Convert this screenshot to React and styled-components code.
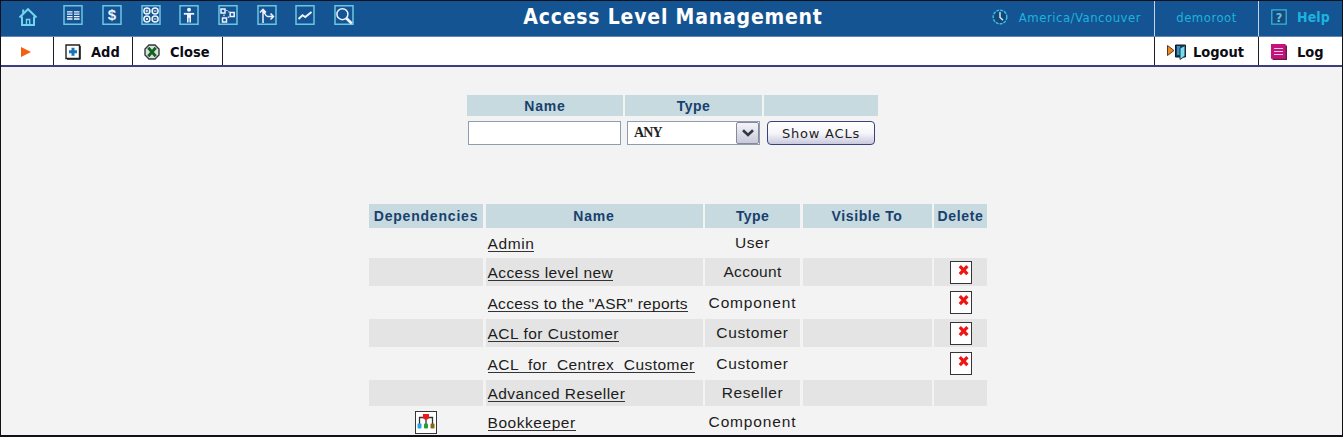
import React from "react";
import styled, { createGlobalStyle } from "styled-components";

const Global = createGlobalStyle`
  * { box-sizing: border-box; }
  html, body { margin: 0; padding: 0; }
  body { overflow: hidden; background: #f3f3f3; }
`;

const Page = styled.div`
  width: 1343px;
  height: 437px;
  overflow: hidden;
  border: 1px solid #101018;
  border-bottom-width: 2px;
  background: #f3f3f3;
  font-family: "Liberation Sans", Arial, sans-serif;
  color: #1c1c20;
`;

const TopBar = styled.header`
  display: grid;
  grid-template-columns: 409px 526px 218px 104px 84px;
  height: 36px;
  background: #155492;
  border-bottom: 1px solid #6683b4;
  color: #1bb3df;
  font-family: "DejaVu Sans Condensed", "DejaVu Sans", sans-serif;
`;

const NavIcons = styled.nav`
  display: flex;
  gap: 18.7px;
  padding: 4px 0 0 17px;

  svg { flex: none; width: 20px; height: 20px; }
  svg:first-child { margin: 1px 6.5px 0 0; }
`;

const Title = styled.h1`
  margin: 0;
  text-align: center;
  font-size: 21px;
  line-height: 33px;
  font-weight: bold;
  letter-spacing: ${(p) => p.$track}px;
  color: #fff;
`;

const TopCell = styled.div`
  display: flex;
  align-items: center;
  justify-content: ${(p) => p.$justify || "center"};
  gap: ${(p) => p.$gap || 0}px;
  padding: 0 ${(p) => p.$right || 0}px 3px 0;
  border-left: ${(p) => (p.$divided ? "1px solid #c3d3e4" : "0")};
  font-size: ${(p) => p.$size || 13}px;
  font-weight: ${(p) => (p.$bold ? "bold" : "normal")};
  letter-spacing: ${(p) => p.$track || 0}px;
  white-space: nowrap;

  svg { flex: none; }
`;

const ToolBar = styled.div`
  display: flex;
  height: 30px;
  background: #fff;
  border-bottom: 2px solid #3c3c80;
  font-family: "DejaVu Sans Condensed", "DejaVu Sans", sans-serif;
`;

const Tool = styled.div`
  display: flex;
  align-items: center;
  width: ${(p) => p.$width}px;
  gap: ${(p) => p.$gap || 0}px;
  padding-left: ${(p) => p.$left}px;
  padding-top: 1px;
  border-right: ${(p) => (p.$last ? "0" : "1px solid #1c1c28")};
  font-size: 14.5px;
  font-weight: bold;
  letter-spacing: ${(p) => p.$track || 0}px;
  color: #0c0c14;
  white-space: nowrap;

  svg { flex: none; }
`;

const Spacer = styled.div`
  flex: 1;
  border-right: 1px solid #1c1c28;
`;

const Filter = styled.form`
  display: grid;
  grid-template-columns: 156px 137px 114px;
  column-gap: 2px;
  row-gap: 5px;
  margin: 28px 0 0 466px;
`;

const HeadCell = styled.div`
  display: flex;
  align-items: center;
  justify-content: center;
  height: ${(p) => p.$height}px;
  background: #c6dadf;
  color: #18406e;
  font-size: 14px;
  font-weight: bold;
  letter-spacing: ${(p) => p.$track || 0}px;
  white-space: nowrap;
`;

const Input = styled.input`
  width: 153px;
  height: 24px;
  margin-left: 1px;
  border: 1px solid #8f9db0;
  background: #fff;
`;

const Select = styled.div`
  display: flex;
  align-items: center;
  justify-content: space-between;
  width: 133px;
  height: 24px;
  margin-left: 2px;
  padding-left: 6px;
  border: 1px solid #8f9db0;
  background: #fff;
  font: bold 14px "Liberation Serif", serif;
  letter-spacing: -0.8px;
  color: #222;
`;

const SelectArrow = styled.span`
  display: flex;
  align-items: center;
  justify-content: center;
  width: 23px;
  height: 22px;
  border: 1px solid #85899f;
  border-radius: 2px;
  background: linear-gradient(#f4f4f8, #c9c9da);
`;

const Button = styled.button`
  width: 108px;
  height: 24px;
  margin-left: 3px;
  padding: 0;
  border: 1px solid #3a4080;
  border-radius: 4px;
  background: linear-gradient(#fff 0%, #f6f6fa 50%, #c9c9de 100%);
  font: 13px "DejaVu Sans", sans-serif;
  letter-spacing: ${(p) => p.$track}px;
  color: #222;
  white-space: nowrap;
`;

const Table = styled.section`
  display: grid;
  row-gap: 2px;
  margin: 59px 0 0 368px;
`;

const Row = styled.div`
  display: grid;
  grid-template-columns: 114px 217px 95px 129px 53px;
  column-gap: 2.5px;
  height: ${(p) => p.$height}px;
`;

const Cell = styled.div`
  display: flex;
  align-items: center;
  justify-content: ${(p) => (p.$start ? "flex-start" : "center")};
  padding-left: ${(p) => (p.$start ? 2 : 0)}px;
  padding-top: ${(p) => (p.$start ? 2 : 0)}px;
  background: ${(p) => (p.$shaded ? "#e4e4e4" : "transparent")};
  font-size: 15.5px;
  letter-spacing: ${(p) => p.$track || 0}px;
  white-space: pre;
`;

const Link = styled.a`
  border-bottom: 1px solid #333338;
  line-height: 15px;
  font-size: 15.5px;
  letter-spacing: ${(p) => p.$track}px;
`;

const IconBox = styled.span`
  display: flex;
  width: 22px;
  height: 23px;
  border: 1px solid #35353a;
  background: #fff;
`;

const Frame = ({ children }) => (
  <svg viewBox="0 0 20 20" fill="none" stroke="#eef4ff" strokeWidth="1.5">
    <path d="M1 .8H19V19.2H1Z" stroke="#6cc5df" strokeWidth="1.5" />
    {children}
  </svg>
);

const HomeIcon = () => (
  <svg viewBox="0 0 20 20" fill="none" stroke="#70d5ed" strokeWidth="2">
    <path d="M1.5 11.5 10 3.2l8.5 8.3M4 10.5V19h12v-8.5" />
    <path d="M5.2 7.5V3.5" />
    <path d="M8.5 19v-5.5h3.2V19" strokeWidth="1.4" />
  </svg>
);

const NavIconSet = () => (
  <>
    <HomeIcon />
    <Frame>
      <path d="M4 6.8h5.5M4 9.2h5.5M4 11.6h5.5M4 14h5.5M11 6.8h5.5M11 9.2h5.5M11 11.6h5.5M11 14h5.5" strokeWidth="1.3" />
    </Frame>
    <Frame>
      <text x="10" y="15" textAnchor="middle" fontSize="15" fontWeight="bold" fontFamily="Liberation Sans" fill="#eef4ff" stroke="none">$</text>
    </Frame>
    <Frame>
      <circle cx="5.9" cy="6" r="3" />
      <circle cx="14.1" cy="6" r="3" />
      <circle cx="5.9" cy="14" r="3" />
      <circle cx="14.1" cy="14" r="3" />
      <path d="M4.5 6h2.8M5.9 4.6v2.8M12.7 6h2.8M4.8 12.9l2.2 2.2M7 12.9l-2.2 2.2M12.7 14h2.8" strokeWidth="1" />
    </Frame>
    <Frame>
      <circle cx="10" cy="4.8" r="2" fill="#eef4ff" stroke="none" />
      <path d="M4.8 8.8h10.4" strokeWidth="1.8" />
      <path d="M8 8h4v5H8z" fill="#eef4ff" stroke="none" />
      <path d="M8.8 12v5.5M11.2 12v5.5" strokeWidth="1.6" />
    </Frame>
    <Frame>
      <path d="M3 4h4v4H3zM12.200 7.500h4v4h-4zM4.500 13h4v4h-4z" />
      <path d="M8.200 5.500h1.300M10.300 6.800h1.200M6 9.500v1.800M9.800 12.200h1.500" strokeWidth="1.2" />
    </Frame>
    <Frame>
      <path d="M6 18V4.500M3 7.500l3-3.200 3 3.200M6.500 6.500c1.500 1.500 2 5 4 5H16M13.500 8.500l3 3-3 3" />
    </Frame>
    <Frame>
      <path d="M3.500 14l4-3.800 2.800 1.800L16.500 7" strokeWidth="1.9" />
    </Frame>
    <Frame>
      <circle cx="8.400" cy="9.200" r="5.500" fill="#155492" />
      <path d="M12.300 13.200l5.500 5.200" strokeWidth="2.800" />
    </Frame>
  </>
);

const ClockIcon = () => (
  <svg width="16" height="16" viewBox="0 0 16 16" fill="none">
    <circle cx="8" cy="8" r="6.8" fill="#134777" stroke="#3bc0e4" strokeWidth="1.4" strokeDasharray="3 1" />
    <path d="M8 3v5.5l3 2.6" stroke="#d6f0f8" strokeWidth="1.4" />
  </svg>
);

const HelpIcon = () => (
  <svg width="16" height="16" viewBox="0 0 16 16" fill="none">
    <path d="M.8.8H15.2V15.2H.8Z" fill="#164b7c" stroke="#2fb8df" strokeWidth="1.3" />
    <text x="8" y="12.6" textAnchor="middle" fontSize="12.5" fontWeight="bold" fontFamily="DejaVu Sans Condensed" fill="#5fc4e0">?</text>
  </svg>
);

const ArrowIcon = () => (
  <svg width="10" height="10" viewBox="0 0 10 10">
    <path d="M0 0 10 5 0 10Z" fill="#f2600f" />
  </svg>
);

const AddIcon = () => (
  <svg width="16" height="16" viewBox="0 0 16 16" fill="none">
    <path d="M1 1H14.5V14.5H1Z" fill="#fff" stroke="#222" strokeWidth="1.4" />
    <path d="M15.3 2v13.3H2" stroke="#222" />
    <path d="M4 7.7h8M8 3.7v8" stroke="#1674b8" strokeWidth="3" />
  </svg>
);

const CloseIcon = () => (
  <svg width="16" height="16" viewBox="0 0 16 16" fill="none">
    <path d="M5 1h6l4 4v6l-4 4H5l-4-4V5Z" fill="#d8e2da" stroke="#30383a" strokeWidth="1.4" />
    <path d="M4.3 3.8l7.4 8.4M11.7 3.8 4.3 12.2" stroke="#126022" strokeWidth="2.8" />
  </svg>
);

const LogoutIcon = () => (
  <svg width="20" height="16" viewBox="0 0 20 16">
    <path d="M.5 1.5 7 6.5.5 11.5Z" fill="#f08a1e" stroke="#5b3720" />
    <path d="M8.5 1h10v12h-10z" fill="#123d60" stroke="#101820" />
    <path d="M10 2h3v9h-3z" fill="#3a8fc4" />
    <path d="M13 4l5-2.5V12l-5 3.5Z" fill="#7bdcec" stroke="#16384a" />
  </svg>
);

const LogIcon = () => (
  <svg width="16" height="16" viewBox="0 0 16 16" fill="none">
    <path d="M1.5 1.5H16V16H1.5Z" fill="#5a2046" />
    <path d="M0 0H14.6V14.8H0Z" fill="#c4147c" />
    <path d="M3 4.500h9M3 7.500h9M3 10.500h9" stroke="#f4c6e2" strokeWidth="1.2" />
  </svg>
);

const DeleteIcon = () => (
  <svg width="20" height="20" viewBox="0 0 20 20" fill="none">
    <path d="M8.800 4.200l7.600 8M16.400 4.200l-7.600 8" stroke="#ee1512" strokeWidth="3.200" />
  </svg>
);

const TreeIcon = () => (
  <svg width="20" height="21" viewBox="0 0 20 21" fill="none">
    <path d="M3.5 12V5.500h13V12M10 5v8" stroke="#333" strokeWidth="1.3" />
    <path d="M7 2h6v4L11.500 7.500h-3L7 6Z" fill="#f01616" />
    <rect x="1.500" y="11.500" width="4" height="5" rx="1" fill="#24a5e4" />
    <rect x="8" y="11.500" width="4" height="5" rx="1" fill="#2a9c35" />
    <rect x="14.500" y="11.500" width="4" height="5" rx="1" fill="#806b12" />
  </svg>
);

const ROWS = [
  { name: "Admin", type: "User", height: 26, track: 0.6, typeTrack: 0.6 },
  { name: "Access level new", type: "Account", height: 28, track: 0.42, typeTrack: 0.3, removable: true },
  { name: 'Access to the "ASR" reports', type: "Component", height: 29, track: 0.28, typeTrack: 0.85, removable: true },
  { name: "ACL for Customer", type: "Customer", height: 28, track: 0.5, typeTrack: 0.65, removable: true },
  { name: "ACL  for  Centrex  Customer", type: "Customer", height: 29, track: 0.45, typeTrack: 0.65, removable: true },
  { name: "Advanced Reseller", type: "Reseller", height: 26, track: 0.45, typeTrack: 0.6 },
  { name: "Bookkeeper", type: "Component", height: 28, track: 0.55, typeTrack: 0.85, dependent: true },
];

const HEADS = [
  ["Dependencies", 0.8],
  ["Name", 0.8],
  ["Type", 0.4],
  ["Visible To", 0.6],
  ["Delete", 0.7],
];

export default function App() {
  return (
    <>
      <Global />
      <Page>
        <TopBar>
          <NavIcons><NavIconSet /></NavIcons>
          <Title $track={0.8}>Access Level Management</Title>
          <TopCell $justify="flex-end" $gap={11} $right={13} $track={0.5}>
            <ClockIcon />America/Vancouver
          </TopCell>
          <TopCell $divided $track={0.5}>demoroot</TopCell>
          <TopCell $divided $bold $size={14} $gap={10} $track={0.1}><HelpIcon />Help</TopCell>
        </TopBar>
        <ToolBar>
          <Tool $width={53} $left={20}><ArrowIcon /></Tool>
          <Tool $width={79} $left={11} $gap={10}><AddIcon />Add</Tool>
          <Tool $width={90} $left={11} $gap={10}><CloseIcon />Close</Tool>
          <Spacer />
          <Tool $width={104} $left={12} $gap={6}><LogoutIcon />Logout</Tool>
          <Tool $width={83} $left={12} $gap={10} $last><LogIcon />Log</Tool>
        </ToolBar>

        <Filter>
          <HeadCell $height={21} $track={0.8}>Name</HeadCell>
          <HeadCell $height={21} $track={0.5}>Type</HeadCell>
          <HeadCell $height={21} />
          <Input aria-label="Name" />
          <Select>
            ANY
            <SelectArrow>
              <svg width="12" height="8" viewBox="0 0 12 8" fill="none">
                <path d="M1 1.200l5 4.800 5-4.800" stroke="#333842" strokeWidth="2.600" />
              </svg>
            </SelectArrow>
          </Select>
          <Button type="button" $track={0.8}>Show ACLs</Button>
        </Filter>

        <Table>
          <Row $height={24}>
            {HEADS.map(([label, track]) => (
              <HeadCell key={label} $height={24} $track={track}>{label}</HeadCell>
            ))}
          </Row>
          {ROWS.map((r, i) => {
            const shaded = i % 2 === 1;
            return (
              <Row key={r.name} $height={r.height}>
                <Cell $shaded={shaded}>{r.dependent && <IconBox><TreeIcon /></IconBox>}</Cell>
                <Cell $shaded={shaded} $start><Link $track={r.track}>{r.name}</Link></Cell>
                <Cell $shaded={shaded} $track={r.typeTrack}>{r.type}</Cell>
                <Cell $shaded={shaded} />
                <Cell $shaded={shaded}>{r.removable && <IconBox><DeleteIcon /></IconBox>}</Cell>
              </Row>
            );
          })}
        </Table>
      </Page>
    </>
  );
}
